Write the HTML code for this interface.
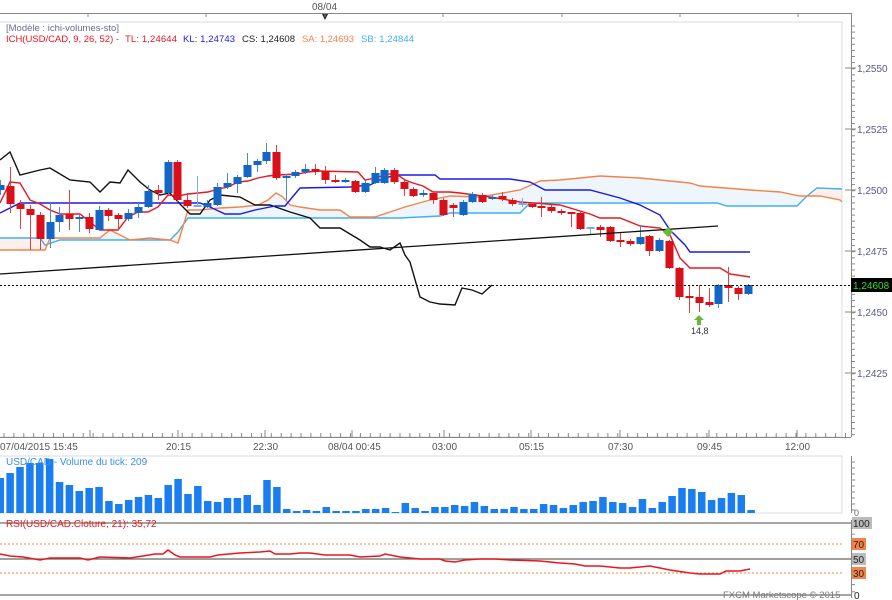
<!DOCTYPE html>
<html><head><meta charset="utf-8"><style>
html,body{margin:0;padding:0;background:#fff;width:892px;height:600px;overflow:hidden}
svg{display:block}
text{font-family:"Liberation Sans","DejaVu Sans",sans-serif;font-size:10px}
</style></head><body>
<svg id="s" width="892" height="600" viewBox="0 0 892 600" xmlns="http://www.w3.org/2000/svg">
<rect x="0" y="0" width="892" height="600" fill="#fff"/>
<g id="cloud"></g>
<rect x="-1" y="22" width="843" height="415" fill="none" stroke="#d6dde6"/>
<line x1="0" y1="13.5" x2="851" y2="13.5" stroke="#888"/>
<line x1="851.5" y1="13" x2="851.5" y2="437" stroke="#888"/>
<line x1="0" y1="437.5" x2="851" y2="437.5" stroke="#888"/>
<text x="312" y="10" fill="#555">08/04</text>
<polygon points="322,14 328,14 325,20" fill="#222"/>
<text x="6" y="31" fill="#6a6a9a" style="font-size:9.5px">[Modèle : ichi-volumes-sto]</text>
<text x="6" y="42" fill="#e8161e" style="font-size:9.5px" textLength="113">ICH(USD/CAD, 9, 26, 52) -</text>
<text x="125" y="42" fill="#e8161e" style="font-size:9.5px" textLength="52">TL: 1,24644</text>
<text x="183" y="42" fill="#1a1ae8" style="font-size:9.5px" textLength="52">KL: 1,24743</text>
<text x="242" y="42" fill="#222" style="font-size:9.5px" textLength="53">CS: 1,24608</text>
<text x="302" y="42" fill="#f4834a" style="font-size:9.5px" textLength="52">SA: 1,24693</text>
<text x="361" y="42" fill="#3fb0f0" style="font-size:9.5px" textLength="53">SB: 1,24844</text>
<g id="axis"></g>
<g id="lines"></g>
<g id="candles"></g>
<line x1="0" y1="285.5" x2="851" y2="285.5" stroke="#000" stroke-dasharray="2,2"/>
<line x1="0" y1="274" x2="718" y2="226" stroke="#111" stroke-width="1.3"/>
<rect x="851" y="278" width="41" height="14" fill="#000"/>
<text x="853" y="289" fill="#2fe02f">1,24608</text>
<polygon points="699,315 704,320 701,320 701,325 697,325 697,320 694,320" fill="#6ab83a"/>
<text x="691" y="334" fill="#333" style="font-size:9px">14,8</text>
<polygon points="668,227 673,232 668,237 663,232" fill="#6ab83a"/>
<rect x="-1" y="456" width="843" height="57" fill="none" stroke="#d6dde6"/>
<line x1="851.5" y1="456" x2="851.5" y2="513" stroke="#888"/>
<g id="vol"></g>
<text x="6" y="465" fill="#3a8ee6">USD/CAD - Volume du tick: 209</text>
<text x="854" y="516" fill="#666" style="font-size:9px">0</text>
<line x1="0" y1="523" x2="851" y2="523" stroke="#888" stroke-width="1.5"/>
<line x1="0" y1="559" x2="851" y2="559" stroke="#666" stroke-width="1.2"/>
<line x1="0" y1="595" x2="851" y2="595" stroke="#888" stroke-width="1.5"/>
<line x1="0" y1="544" x2="842" y2="544" stroke="#f4834a" stroke-dasharray="2,2"/>
<line x1="0" y1="573" x2="842" y2="573" stroke="#f4834a" stroke-dasharray="2,2"/>
<line x1="851.5" y1="520" x2="851.5" y2="598" stroke="#888"/>
<text x="6" y="527" fill="#e8161e">RSI(USD/CAD.Cloture, 21): 35,72</text>
<rect x="852" y="517" width="20" height="12" fill="#bbb"/><text x="853" y="527" fill="#222">100</text>
<rect x="852" y="538" width="14" height="12" fill="#f4834a"/><text x="853" y="548" fill="#222">70</text>
<rect x="852" y="553" width="14" height="12" fill="#bbb"/><text x="853" y="563" fill="#222">50</text>
<rect x="852" y="567" width="14" height="12" fill="#f4834a"/><text x="853" y="577" fill="#222">30</text>
<text x="854" y="599" fill="#222">0</text>
<polyline id="rsi" fill="none" stroke="#e8161e" stroke-width="1.5"/>
<text x="723" y="598" fill="#777" style="font-size:9.5px">FXCM Marketscope © 2015</text>
<g fill="#555">
<text x="0" y="450">07/04/2015 15:45</text>
<text x="166" y="450">20:15</text>
<text x="253" y="450">22:30</text>
<text x="328" y="450">08/04 00:45</text>
<text x="432" y="450">03:00</text>
<text x="519" y="450">05:15</text>
<text x="608" y="450">07:30</text>
<text x="697" y="450">09:45</text>
<text x="785" y="450">12:00</text>
</g>
</svg>
<script>
var NS="http://www.w3.org/2000/svg";
function el(p,t,a){var e=document.createElementNS(NS,t);for(var k in a)e.setAttribute(k,a[k]);document.getElementById(p).appendChild(e);return e;}
function pts(a){return a.map(function(p){return p[0]+","+p[1]}).join(" ");}
var lab=[[68,"1,2550"],[129,"1,2525"],[190,"1,2500"],[251,"1,2475"],[312,"1,2450"],[373,"1,2425"]];
for(var y=26;y<437;y+=6.1){el("axis","line",{x1:851,y1:y,x2:855,y2:y,stroke:"#888"});}
lab.forEach(function(l){el("axis","line",{x1:845,y1:l[0],x2:856,y2:l[0],stroke:"#888"});var t=el("axis","text",{x:857,y:l[0]+4,fill:"#5a5a8a"});t.textContent=l[1];});
for(var x=4;x<851;x+=9.9){el("axis","line",{x1:x,y1:437,x2:x,y2:433,stroke:"#888"});}
[90,178,265,352,444,531,620,709,797].forEach(function(x){el("axis","line",{x1:x,y1:437,x2:x,y2:430,stroke:"#888"});});
[88,206,325,443,562,680,798].forEach(function(x){el("axis","line",{x1:x,y1:14,x2:x,y2:17,stroke:"#888"});});
for(var y=462;y<513;y+=6){el("axis","line",{x1:851,y1:y,x2:855,y2:y,stroke:"#888"});}
for(var y=527;y<595;y+=7.2){el("axis","line",{x1:851,y1:y,x2:855,y2:y,stroke:"#888"});}
var SA=[[0,250],[45,250],[50,238],[100,238],[110,230],[130,240],[150,238],[170,240],[178,243],[188,210],[200,210],[220,208],[240,207],[258,205],[268,200],[276,193],[283,197],[290,205],[300,207],[320,210],[340,210],[350,217],[375,217],[390,212],[405,207],[430,200],[450,196],[480,197],[520,190],[540,181],[560,180],[580,178],[600,176],[620,177],[640,178],[660,180],[690,183],[700,186],[750,190],[780,192],[800,196],[820,196],[840,200],[842,202]];
var SB=[[0,238],[40,238],[45,245],[60,240],[170,240],[178,232],[188,218],[400,218],[440,216],[450,213],[520,213],[530,203],[717,203],[727,206],[797,206],[807,196],[817,188],[842,189]];
function interp(a,x){for(var i=1;i<a.length;i++){if(x<=a[i][0]){var p=a[i-1],q=a[i];var t=(x-p[0])/((q[0]-p[0])||1);return p[1]+t*(q[1]-p[1]);}}return a[a.length-1][1];}
for(var x=0;x<842;x+=1){var a=interp(SA,x),b=interp(SB,x);el("cloud","rect",{x:x,y:Math.min(a,b),width:1.05,height:Math.abs(a-b),fill:a<b?"#eef6fc":"#fdf0ec"});}
var TL=[[0,203],[10,182],[20,183],[30,200],[40,204],[50,210],[60,214],[80,214],[90,222],[100,230],[118,230],[128,217],[138,212],[148,212],[158,207],[168,195],[178,196],[188,194],[208,192],[218,189],[228,187],[238,182],[248,181],[258,178],[268,176],[278,175],[298,174],[308,172],[318,171],[358,172],[365,180],[375,178],[385,175],[395,173],[405,180],[413,183],[423,186],[433,192],[450,192],[460,193],[490,197],[520,202],[560,205],[590,214],[600,218],[620,218],[640,226],[660,228],[670,235],[680,258],[690,268],[720,268],[730,274],[750,277]];
var KL=[[0,213],[20,203],[200,203],[210,207],[225,214],[240,214],[255,210],[265,208],[275,206],[285,206],[290,200],[300,188],[350,187],[370,185],[380,180],[395,175],[435,175],[440,179],[510,179],[530,182],[545,190],[590,190],[620,198],[640,205],[660,215],[670,230],[685,245],[690,252],[750,252]];
var CS=[[0,160],[10,152],[20,175],[40,170],[50,168],[70,180],[90,182],[100,192],[110,182],[120,183],[128,170],[140,182],[150,190],[160,195],[170,193],[180,204],[190,214],[200,214],[210,200],[220,195],[240,197],[255,205],[270,205],[290,212],[310,218],[320,228],[340,228],[360,240],[370,247],[380,247],[390,250],[400,243],[405,255],[410,262],[420,297],[430,302],[440,304],[455,305],[462,288],[472,290],[482,294],[492,285]];
el("lines","polyline",{points:pts(SB),fill:"none",stroke:"#3fb0f0","stroke-width":1.4});
el("lines","polyline",{points:pts(SA),fill:"none",stroke:"#f4834a","stroke-width":1.4});
el("lines","polyline",{points:pts(CS),fill:"none",stroke:"#111","stroke-width":1.4});
el("lines","polyline",{points:pts(KL),fill:"none",stroke:"#1a1ae8","stroke-width":1.4});
el("lines","polyline",{points:pts(TL),fill:"none",stroke:"#e8161e","stroke-width":1.4});
var C=[[0,185,190,180,195,'b'],[10,186,204,167,213,'r'],[20,204,209,200,229,'r'],[30,209,215,205,250,'r'],[40,215,239,212,250,'r'],[50,222,239,203,248,'b'],[59,215,222,207,232,'b'],[69,214,219,190,230,'r'],[79,217,218,215,232,'b'],[89,217,229,213,233,'r'],[99,210,230,206,231,'b'],[108,210,216,208,221,'r'],[118,215,219,213,230,'r'],[128,213,219,209,221,'b'],[138,207,213,203,218,'b'],[148,191,207,185,208,'b'],[158,190,193,185,200,'r'],[168,162,193,160,195,'b'],[177,162,200,160,202,'r'],[187,200,206,193,208,'r'],[197,205,207,176,207,'l'],[207,203,207,200,208,'b'],[217,187,205,183,206,'b'],[227,183,187,173,189,'b'],[237,177,184,175,193,'b'],[247,165,177,153,178,'b'],[257,161,165,159,172,'b'],[266,152,161,143,164,'b'],[276,152,178,145,180,'r'],[286,176,178,174,200,'b'],[295,172,176,170,178,'b'],[305,169,172,164,174,'b'],[315,169,172,164,175,'r'],[325,171,180,166,184,'r'],[335,180,182,175,183,'r'],[345,180,182,178,183,'b'],[355,181,192,180,193,'r'],[365,183,192,179,193,'b'],[375,173,183,167,184,'b'],[384,170,183,168,184,'b'],[394,170,182,168,184,'r'],[404,182,189,180,196,'r'],[413,189,196,187,197,'r'],[423,193,195,190,197,'b'],[433,193,200,191,204,'r'],[443,200,215,198,216,'r'],[453,205,208,203,217,'r'],[463,202,215,200,216,'b'],[472,194,202,192,203,'b'],[482,195,202,193,203,'r'],[492,197,198,195,200,'b'],[502,196,199,192,201,'r'],[512,200,204,198,206,'r'],[522,203,205,198,207,'l'],[532,204,207,202,208,'r'],[541,206,207,197,217,'r'],[551,207,211,205,213,'r'],[561,211,213,209,215,'r'],[571,212,214,212,227,'r'],[580,213,229,212,230,'r'],[590,227,229,227,234,'l'],[600,227,230,225,237,'r'],[610,227,241,226,242,'r'],[620,240,242,233,247,'r'],[630,241,244,239,246,'r'],[640,237,244,225,245,'b'],[649,236,251,235,256,'r'],[659,240,251,238,252,'b'],[669,241,268,240,269,'r'],[679,268,297,267,300,'r'],[689,296,298,285,313,'r'],[699,297,303,285,312,'r'],[709,302,305,288,307,'r'],[718,285,304,284,308,'b'],[728,285,288,267,302,'r'],[738,288,294,286,300,'r'],[748,285,294,284,295,'b']];
C.forEach(function(c){var col=c[5]=='r'?'#d8101a':(c[5]=='b'?'#1366c4':'#7aaee0');
el("candles","line",{x1:c[0]+.5,y1:c[3],x2:c[0]+.5,y2:c[4],stroke:c[5]=='l'?'#7aaee0':(c[5]=='r'?'#e04040':'#4a8ad0')});
el("candles","rect",{x:c[0]-3.5,y:c[1],width:8,height:Math.max(2,c[2]-c[1]),fill:col});});
var V=[478,473,467,463,463,459,482,485,491,488,487,501,504,500,497,495,498,485,479,494,486,501,502,498,498,495,505,480,487,509,511,510,511,507,511,511,511,509,509,508,512,503,508,511,507,507,505,506,502,506,509,509,507,509,509,504,505,508,505,502,501,497,502,503,507,499,508,502,496,488,489,492,500,498,493,495,510];
V.forEach(function(v,i){el("vol","rect",{x:i*9.88-3.5,y:v,width:7.5,height:513-v,fill:"#1b7ef0"});});
var R=[[0,554],[10,556],[23,557],[40,560],[50,558],[80,558],[88,560],[100,557],[130,558],[143,556],[155,554],[163,554],[168,550],[175,555],[180,557],[210,557],[218,555],[240,553],[260,552],[270,551],[275,554],[290,554],[300,553],[310,553],[325,555],[350,555],[360,557],[380,556],[385,554],[400,557],[420,559],[440,559],[445,561],[455,562],[465,560],[480,559],[495,559],[510,560],[540,561],[560,563],[575,564],[585,566],[600,566],[620,568],[630,568],[640,567],[650,566],[660,568],[670,570],[690,573],[700,574],[720,574],[726,571],[740,571],[750,569]];
document.getElementById("rsi").setAttribute("points",pts(R));
</script>
</body></html>
